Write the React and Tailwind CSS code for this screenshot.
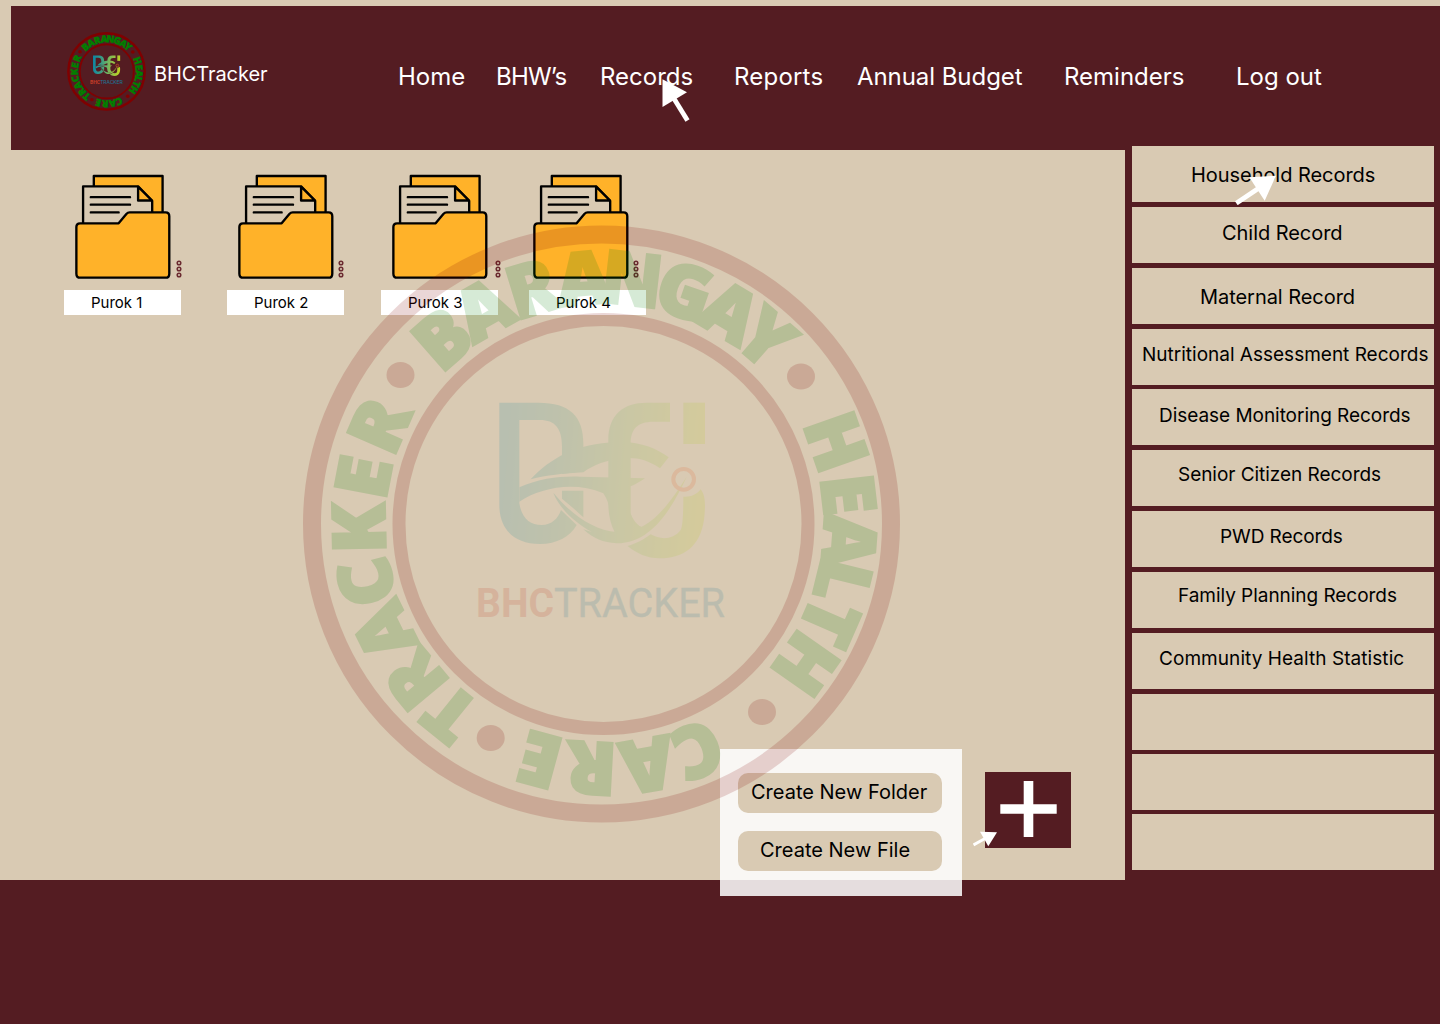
import React from "react";

const RIM_LETTERS = [
  ["B", -41.3], ["A", -29.5], ["R", -17.1], ["A", -4.9], ["N", 6.5], ["G", 19.1], ["A", 30.8], ["Y", 41.1],
  ["H", 70.7], ["E", 83.3], ["A", 94.2], ["L", 103.8], ["T", 113.7], ["H", 125],
  ["C", 157.7], ["A", 169.9], ["R", 183], ["E", 195.2],
  ["T", 219], ["R", 230.3], ["A", 243.8], ["C", 256], ["K", 268.8], ["E", 280.8], ["R", 293.5],
];

const RIM_DOTS = [
  [400.5, 375], [801, 376.5], [762, 712], [490.7, 738],
];

function Emblem({ id, className }) {
  const fill = `url(#${id})`;
  return (
    <svg viewBox="302 225 599 599" className={className} aria-hidden="true">
      <defs>
        <linearGradient id={id} gradientUnits="userSpaceOnUse" x1="118" y1="250" x2="735" y2="300">
          <stop offset="0" stopColor="#0c87a4" />
          <stop offset="0.3" stopColor="#3a9a84" />
          <stop offset="0.6" stopColor="#7cb95a" />
          <stop offset="1" stopColor="#bfd022" />
        </linearGradient>
      </defs>
      <g fill="none" stroke="#800000">
        <circle cx="601.5" cy="524" r="289.5" strokeWidth="18" />
        <circle cx="603.5" cy="524" r="204.5" strokeWidth="13" />
      </g>
      <g fill="#800000">
        {RIM_DOTS.map(([x, y]) => (
          <ellipse key={x} cx={x} cy={y} rx="14" ry="13" />
        ))}
      </g>
      <g fill="#008000" stroke="#008000" strokeWidth="2.800" fontFamily="'Open Sans', 'Noto Sans', sans-serif" fontWeight="800" fontSize="73" textAnchor="middle">
        {RIM_LETTERS.map(([ch, a]) => (
          <text key={a} x="604.5" y="303.500" transform={`rotate(${a} 604.5 523)`}>{ch}</text>
        ))}
      </g>
      <g transform="translate(460 380) scale(0.33333)" fill={fill}>
        <path d="M118 68H235C330 68 370 110 370 190V274L306 282V200C306 145 285 120 240 120H178V370C185 415 210 435 245 435C275 435 295 415 303 390L350 435C330 470 290 492 240 492C165 492 118 450 118 375Z" />
        <path d="M212 298C270 235 350 190 470 186C540 183 590 205 626 232L600 265C560 238 530 232 490 235C440 240 400 255 370 277C310 280 260 286 212 298Z" />
        <path d="M178 322C240 295 300 288 360 290L555 295C530 312 510 322 480 330C505 370 510 425 545 442L465 458C450 420 455 375 430 340C340 302 240 325 178 365Z" />
        <path d="M306 332H370V412L340 385L306 356Z" />
        <path d="M630 68V125H580C530 125 512 150 512 190V400C518 425 530 435 545 442C520 458 490 460 465 458C450 430 445 400 445 370V180C445 105 490 68 560 68Z" />
        <path d="M280 338C330 400 400 452 470 456C560 458 610 400 680 290C640 375 580 490 470 490C430 488 400 475 370 448L395 456C350 430 300 390 280 338Z" />
        <path d="M670 68H735V192H670Z" />
        <path d="M722 328C740 350 735 390 732 420C720 500 670 535 600 535C560 535 530 520 503 498C530 490 550 480 572 463C600 480 640 480 662 450C668 440 670 400 670 350C690 352 710 345 722 328Z" />
        <circle cx="671" cy="298" r="31" fill="none" stroke="#e8602c" strokeWidth="12" />
      </g>
      <g fontFamily="Roboto, sans-serif" fontSize="40">
        <text x="476" y="617" fontWeight="700" fill="#c23c28" textLength="78" lengthAdjust="spacingAndGlyphs">BHC</text>
        <text x="554" y="617" fontWeight="400" fill="#1f7494" stroke="#1f7494" strokeWidth="0.400" textLength="171" lengthAdjust="spacingAndGlyphs">TRACKER</text>
      </g>
    </svg>
  );
}

function FolderIcon({ className }) {
  return (
    <svg viewBox="75 42 286 313" className={className} stroke="#000" strokeWidth="7" strokeLinejoin="round" strokeLinecap="round" fill="#ffb229" aria-hidden="true">
      <path d="M131 48H336V170H131Z" />
      <path d="M99 79H263L305 122V200H99Z" fill="#d9cab3" />
      <path d="M263 80V121H304Z" />
      <path d="M122 111H239M122 133.500H239M122 156.500H205" fill="none" />
      <path d="M90 189H205L228 161Q232 156.500 238 156.500H345Q356 156.500 356 168V339Q356 351 345 351H91Q79 351 79 339V200Q79 189 90 189Z" />
    </svg>
  );
}

function MoreDots({ className }) {
  return (
    <svg viewBox="0 0 6 18" className={className} fill="none" stroke="#6b2a30" strokeWidth="1.500" aria-hidden="true">
      <circle cx="3" cy="3" r="1.800" />
      <circle cx="3" cy="9" r="1.800" />
      <circle cx="3" cy="15" r="1.800" />
    </svg>
  );
}

const NAV = [
  ["Home", "w-[98px]"],
  ["BHW’s", "w-[104px] tracking-[-0.8px]"],
  ["Records", "w-[134px]"],
  ["Reports", "w-[123px] tracking-[0.2px]"],
  ["Annual Budget", "w-[207px] tracking-[-0.06px]"],
  ["Reminders", "w-[172px]"],
  ["Log out", "w-[100px]"],
];

const FOLDERS = [
  { name: "Purok 1", cell: "w-[163px]", icon: "ml-[10.5px]", dots: "ml-[5px]" },
  { name: "Purok 2", cell: "w-[154px]", icon: "ml-[10.5px]", dots: "ml-[4px]" },
  { name: "Purok 3", cell: "w-[148px]", icon: "ml-[10.5px]", dots: "ml-[7px]" },
  { name: "Purok 4", cell: "w-[148px]", icon: "ml-[3.5px]", dots: "ml-[4px]" },
];

const SIDEBAR = [
  ["Household Records", "mb-[5px] pl-[59px] pt-[19px] text-[20px] tracking-[-0.05px]"],
  ["Child Record", "mb-[5px] pl-[90px] pt-[16px] text-[20px] tracking-[-0.05px]"],
  ["Maternal Record", "mb-[5px] pl-[68px] pt-[19px] text-[20px] tracking-[-0.05px]"],
  ["Nutritional Assessment Records", "mb-[4px] pl-[10px] pt-[16px] text-[19px]"],
  ["Disease Monitoring Records", "mb-[5px] pl-[27px] pt-[17px] text-[19px] tracking-[-0.04px]"],
  ["Senior Citizen Records", "mb-[5px] pl-[46px] pt-[15px] text-[19px] tracking-[-0.04px]"],
  ["PWD Records", "mb-[5px] pl-[88px] pt-[16px] text-[19px] tracking-[-0.08px]"],
  ["Family Planning Records", "mb-[5px] pl-[46px] pt-[14px] text-[19px] tracking-[-0.04px]"],
  ["Community Health Statistic", "mb-[5px] pl-[27px] pt-[16px] text-[19px] tracking-[0.06px]"],
  ["", "mb-[4px]"],
  ["", "mb-[4px]"],
  ["", ""],
];

export default function App() {
  return (
    <div className="relative h-[1024px] w-[1440px] overflow-hidden bg-[#541c22] font-['Inter',sans-serif] text-black">
      <div className="bg-[#d9cab3] pl-[11px] pt-[6px]">
        <header className="flex h-[144px] bg-[#541c22] text-white">
          <Emblem id="mark-header" className="ml-[56px] mt-[25.5px] size-[79px] shrink-0" />
          <span className="ml-[8px] mt-[58px] w-[244px] text-[20px] leading-[20px] tracking-[-0.08px]">BHCTracker</span>
          <nav className="mt-[59px] flex text-[24px] leading-[24px]">
            {NAV.map(([label, cls]) => (
              <a key={label} className={`${cls} shrink-0 whitespace-nowrap`}>{label}</a>
            ))}
          </nav>
        </header>
      </div>

      <div className="flex items-start">
        <main className="flex h-[730px] w-[1125px] flex-col justify-between bg-[#d9cab3] pb-[32px] pl-[64px] pt-[24px]">
          <div className="flex">
            {FOLDERS.map((f) => (
              <div key={f.name} className={f.cell}>
                <div className="flex items-end">
                  <FolderIcon className={`${f.icon} h-[105px] w-[96px] shrink-0`} />
                  <MoreDots className={`${f.dots} mb-[1px] h-[18px] w-[6px] shrink-0`} />
                </div>
                <div className="mt-[11px] h-[25px] w-[117px] bg-white pl-[27px] pt-[5px] text-[15px] leading-[15px]">{f.name}</div>
              </div>
            ))}
          </div>
          <button className="mr-[54px] flex h-[76px] w-[86px] items-center justify-center self-end bg-[#541c22]">
            <svg viewBox="0 0 57 57" className="mb-[2px] size-[57px]" stroke="#fff" strokeWidth="9.600" aria-hidden="true">
              <path d="M28.500 0V56M0.300 28H56.700" />
            </svg>
          </button>
        </main>

        <aside className="-mt-[4px] ml-[7px] w-[302px]">
          {SIDEBAR.map(([label, cls], i) => (
            <div key={i} className={`${cls} h-[56px] whitespace-nowrap bg-[#d9cab3] leading-[20px]`}>{label}</div>
          ))}
        </aside>
      </div>

      <div className="absolute left-[720px] top-[749px] flex h-[147px] w-[242px] flex-col gap-[18px] bg-white/85 px-[18px] pt-[24px] text-[20px] leading-[20px]">
        <button className="h-[40px] w-[204px] rounded-[10px] bg-[#d9cab3] pb-[2px] pl-[13px] text-left">Create New Folder</button>
        <button className="h-[40px] w-[204px] rounded-[10px] bg-[#d9cab3] pb-[2px] pl-[22px] text-left">Create New File</button>
      </div>

      <Emblem id="mark-watermark" className="pointer-events-none absolute left-[302px] top-[225px] size-[599px] opacity-[0.155]" />

      <svg viewBox="0 0 28 43" className="pointer-events-none absolute left-[662px] top-[79px] h-[43px] w-[28px]" fill="#fff" aria-hidden="true">
        <path d="M0.500 0.300L25 13.300L0.500 28Z" />
        <path d="M11 18L25.500 41.500" stroke="#fff" strokeWidth="4.800" />
      </svg>
      <svg viewBox="0 0 42 30" className="pointer-events-none absolute left-[1235px] top-[175px] h-[30px] w-[42px]" fill="#fff" aria-hidden="true">
        <path d="M41 0.700L14.300 2.300L29.700 25.700Z" />
        <path d="M24 13L1.300 28.200" stroke="#fff" strokeWidth="4.800" />
      </svg>
      <svg viewBox="0 0 25 16" className="pointer-events-none absolute left-[973px] top-[831px] h-[16px] w-[25px]" fill="#fff" aria-hidden="true">
        <path d="M24 1.300L7 0.700L15.300 15.300Z" />
        <path d="M12 7.500L0.500 14" stroke="#fff" strokeWidth="3" />
      </svg>
    </div>
  );
}
